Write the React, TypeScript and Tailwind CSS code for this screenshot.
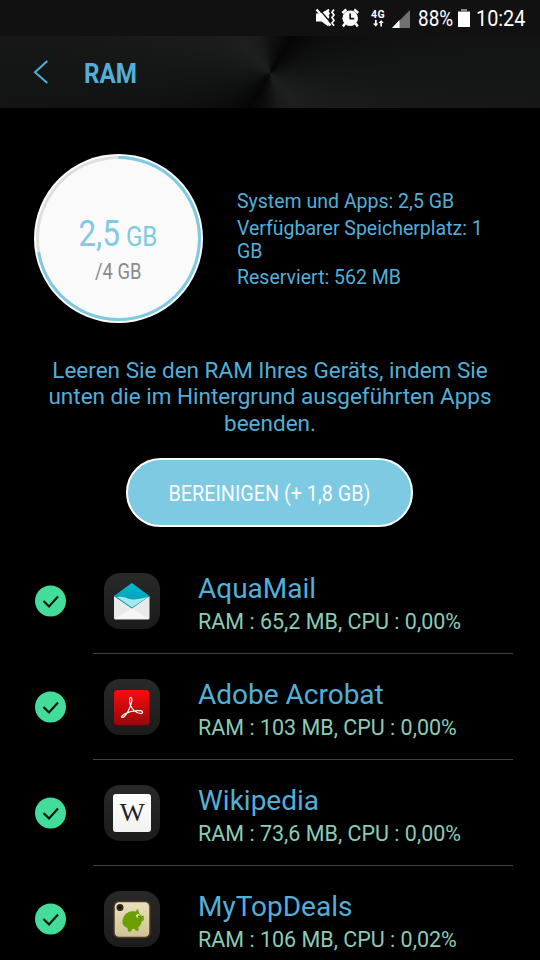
import type { ReactNode } from 'react';

const roboto = "font-['Roboto',sans-serif]";

function StatusBar() {
  return (
    <div className="flex h-9 shrink-0 items-center bg-[#111111] pl-[315px] text-white">
      <svg width="55" height="36" viewBox="0 0 55 36" fill="#fff">
        <path d="M1 13.500h4.500l8-4.500v17.500l-7-5H1z" />
        <path d="m1.500 9.500 14 16" stroke="#fff" strokeWidth="2.400" />
        <path d="m3.600 8.500 12 14" stroke="#111" strokeWidth="1.200" />
        <path d="m14 9.500-1.500 2 1.500 2-1.500 2 1.500 2M19 9.500l-2 2.700 2 2.700-2 2.700 2 2.700-2 2.700 2 2.700" fill="none" stroke="#fff" strokeWidth="1.700" />
        <circle cx="35.200" cy="18.200" r="7.800" />
        <path d="m27.300 13 4-3.500M43.200 13l-4-3.500M30 23.500l-2 3M40.700 23.500l2 3" stroke="#fff" strokeWidth="2.400" />
        <path d="M35.200 13.500V18.600h4" fill="none" stroke="#111" strokeWidth="1.700" />
      </svg>
      <div className="flex w-[16px] flex-col items-center">
        <span className="text-[10.500px] leading-[10px] font-bold tracking-[0.300px]">4G</span>
        <svg width="13" height="7" viewBox="0 0 13 7" fill="#fff">
          <path d="M3 0h1.700v3.500h1.700L3.800 6.500 1 3.500h2zM8.300 6.500H10V3h1.700L9.200 0 6.500 3h1.800z" />
        </svg>
      </div>
      <svg width="18" height="18" viewBox="0 0 18 18" className="mt-px ml-[6px]">
        <path d="M0 18 18 0v18z" fill="#707070" />
        <path d="M0 18 7.500 10v8z" fill="#fff" />
      </svg>
      <span className="ml-[8px] w-[35px] origin-left scale-x-[0.860] text-[22px] whitespace-nowrap">88%</span>
      <svg width="12" height="18" viewBox="0 0 12 18" className="ml-[5px]">
        <path d="M3 0h6v2h3v2H0V2h3z" fill="#888" />
        <path d="M0 3h12v15H0z" fill="#fff" />
      </svg>
      <span className="ml-[6px] w-[50px] origin-left scale-x-[0.900] text-[22px] whitespace-nowrap">10:24</span>
    </div>
  );
}

function Header() {
  return (
    <header className="flex h-[72px] shrink-0 items-center bg-[conic-gradient(from_0deg_at_50%_52%,#101111_0deg,#050505_32deg,#0f1110_70deg,#141615_90deg,#191a1a_110deg,#1d1e1e_140deg,#191a1a_165deg,#101111_180deg,#050505_212deg,#0f1110_250deg,#141615_270deg,#191a1a_290deg,#1d1e1e_320deg,#191a1a_345deg,#101111_360deg)] pl-[33px] text-[#53afd8]">
      <svg width="16" height="24" viewBox="0 0 16 24" fill="none" stroke="currentColor" strokeWidth="2">
        <path d="M14.300 1 2 12.200 14.300 23" />
      </svg>
      <h1 className="mt-[4px] ml-[35px] origin-left scale-x-[0.850] text-[28.500px] font-bold">RAM</h1>
    </header>
  );
}

function Gauge() {
  return (
    <div className="relative h-[169px] w-[169px] shrink-0">
      <svg width="169" height="169" viewBox="0 0 169 169" fill="none">
        <circle cx="84.500" cy="84.500" r="84.500" fill="#fff" />
        <circle cx="84.500" cy="84.500" r="80" fill="#fafafa" />
        <circle cx="84.500" cy="84.500" r="81" stroke="#dfdfdf" strokeWidth="3" />
        <circle cx="84.500" cy="84.500" r="81" stroke="#7ecae2" strokeWidth="3" pathLength="100" strokeDasharray="72.300 100" transform="rotate(-90 84.500 84.500)" />
      </svg>
      <div className="absolute inset-0 flex flex-col items-center pt-[58px]">
        <div className="mr-[2px] flex scale-x-[0.860] items-baseline leading-[44px] whitespace-nowrap text-[#7ecae2]">
          <span className="text-[36.500px]">2,5</span>
          <span className="ml-[7px] text-[28px]">GB</span>
        </div>
        <span className="mt-px scale-x-[0.855] text-[21.500px] leading-[24px] whitespace-nowrap text-[#8a8a8a]">/4 GB</span>
      </div>
    </div>
  );
}

const AquaIcon = (
  <svg width="56" height="56" viewBox="0 0 56 56">
    <defs>
      <linearGradient id="aqua" x1="0" y1="0" x2="0" y2="1">
        <stop stopColor="#00bcd4" />
        <stop offset="1" stopColor="#0097a7" />
      </linearGradient>
    </defs>
    <path d="M10 23 28 35l17.500-12v22q0 1.500-1.500 1.500H11.500q-1.500 0-1.500-1.500z" fill="#e9e9e9" />
    <path d="m10.500 46 17.500-11 17 11z" fill="#f6f6f6" />
    <path d="M27.800 10 45.500 23 27.800 35.500 10 23z" fill="url(#aqua)" />
    <path d="M13 24q6-1 11 1.500t20-1.500L28 34.500z" fill="#a6e8ee" />
  </svg>
);

const AcrobatIcon = (
  <svg width="56" height="56" viewBox="0 0 56 56">
    <defs>
      <linearGradient id="acro" x1="0" y1="0" x2="0" y2="1">
        <stop stopColor="#fb0b0d" />
        <stop offset="1" stopColor="#97080a" />
      </linearGradient>
    </defs>
    <rect x="10" y="11" width="35.500" height="35" rx="3.500" fill="url(#acro)" />
    <path d="M27 18.500c-1.800-.5-1.800 3.500-.8 7 1.500 5 6.500 9 10.300 9 3 0 2.800-2.700-.5-2.900-5-.3-11.500 1.200-15.500 3.400-3.500 2-3.800 4-1.800 3.400 3.500-1 8-10.500 9-15.900.4-2.500.2-3.800-.7-4z" fill="none" stroke="#fff" strokeWidth="1.200" />
  </svg>
);

const WikiIcon = (
  <div className="flex h-[38px] w-[38px] items-center justify-center rounded-[3px] bg-linear-to-b from-white to-[#f2f2f2]">
    <span className="scale-x-[1.020] font-['Liberation_Serif',serif] text-[26px] leading-[38px] text-[#222]">W</span>
  </div>
);

const PigIcon = (
  <svg width="56" height="56" viewBox="0 0 56 56">
    <defs>
      <linearGradient id="deal" x1="0" y1="0" x2="0" y2="1">
        <stop stopColor="#e9e1bd" />
        <stop offset="1" stopColor="#cfc394" />
      </linearGradient>
    </defs>
    <rect x="10" y="10.500" width="36" height="36" rx="5" fill="url(#deal)" stroke="#4c3820" strokeWidth="1.500" />
    <circle cx="16" cy="16.500" r="3.500" fill="#35291b" />
    <circle cx="16" cy="16.500" r="1.500" fill="#111" />
    <path d="M15.500 32c.8 1.500 2 1 3 .2-.5-7 4-11.800 10-12 1.500 0 2.300.2 3 .4l2.500-2.800 1 3.900 1.500 2.500 1.500.5h1.800v4.500l-2 1q-1 4.500-3.500 6l.5 3.500h-3.200l-1-2-2.800.5-.5 2.200h-3.300l-.5-3.500c-3-1-4.500-3-5-4.500-1.500.5-3 .5-3-.5z" fill="#6b9f00" />
    <circle cx="34" cy="24.800" r="1.900" fill="#d9efb0" />
    <circle cx="35" cy="25.600" r="1" fill="#456800" />
  </svg>
);

const apps: { name: string; usage: string; icon: ReactNode }[] = [
  { name: 'AquaMail', usage: 'RAM : 65,2 MB, CPU : 0,00%', icon: AquaIcon },
  { name: 'Adobe Acrobat', usage: 'RAM : 103 MB, CPU : 0,00%', icon: AcrobatIcon },
  { name: 'Wikipedia', usage: 'RAM : 73,6 MB, CPU : 0,00%', icon: WikiIcon },
  { name: 'MyTopDeals', usage: 'RAM : 106 MB, CPU : 0,02%', icon: PigIcon },
];

function AppRow({ name, usage, icon }: { name: string; usage: string; icon: ReactNode }) {
  return (
    <li className="flex h-[106px] shrink-0 pl-[35px]">
      <svg width="31" height="106" viewBox="0 0 31 106" fill="none">
        <circle cx="15.500" cy="53" r="15.500" fill="#42dc9b" />
        <path d="m8.500 53 5.500 5.500L23 48.500" stroke="#07150f" strokeWidth="2.200" />
      </svg>
      <div className="ml-[27px] flex w-[420px] items-center border-b border-[#424242] pl-[11px]">
        <div className="mt-px flex h-14 w-14 items-center justify-center rounded-[16px] bg-linear-to-b from-[#292929] to-[#1b1b1b]">{icon}</div>
        <div className="mt-[5px] ml-[38px] whitespace-nowrap">
          <div className="text-[28px] leading-[36px] text-[#53afd8]">{name}</div>
          <div className="text-[21.500px] leading-[29px] text-[#8ccbb4]">{usage}</div>
        </div>
      </div>
    </li>
  );
}

export default function App() {
  return (
    <div className={`flex h-[960px] w-[540px] flex-col overflow-hidden bg-black ${roboto}`}>
      <StatusBar />
      <Header />
      <section className="flex h-[215px] shrink-0 pt-[46px] pl-[34px]">
        <Gauge />
        <div className="mt-[36px] ml-[34px] flex flex-col gap-[3.500px] text-[19.500px] leading-[23px] whitespace-nowrap text-[#53afd8]">
          <p>System und Apps: 2,5 GB</p>
          <p>Verfügbarer Speicherplatz: 1<br />GB</p>
          <p>Reserviert: 562 MB</p>
        </div>
      </section>
      <p className="mt-[33.500px] shrink-0 text-center text-[22.500px] leading-[26.500px] whitespace-nowrap text-[#53afd8]">
        Leeren Sie den RAM Ihres Geräts, indem Sie<br />
        unten die im Hintergrund ausgeführten Apps<br />
        beenden.
      </p>
      <button className="mt-[22px] ml-[126px] flex h-[69px] w-[287px] shrink-0 items-center justify-center rounded-full border-2 border-white bg-[#7ecae2] pt-[2px] text-[22px] text-[#fafafa]">
        <span className="scale-x-[0.898] whitespace-nowrap">BEREINIGEN (+ 1,8 GB)</span>
      </button>
      <ul className="mt-[21px] flex shrink-0 flex-col">
        {apps.map((app) => (
          <AppRow key={app.name} {...app} />
        ))}
      </ul>
    </div>
  );
}
